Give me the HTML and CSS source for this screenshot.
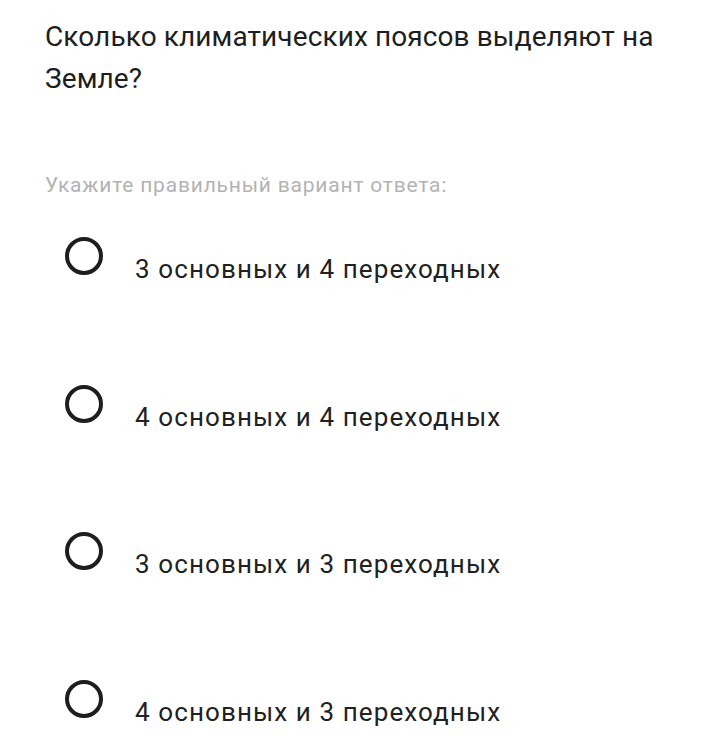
FILE: index.html
```html
<!DOCTYPE html>
<html lang="ru">
<head>
<meta charset="utf-8">
<link rel="stylesheet" href="styles.css">
</head>
<body>
<div class="page">
  <h1 class="question">Сколько климатических поясов выделяют на Земле?</h1>
  <p class="hint">Укажите правильный вариант ответа:</p>
  <ul class="options">
    <li class="option"><span class="radio"></span><span class="label">3 основных и 4 переходных</span></li>
    <li class="option"><span class="radio"></span><span class="label">4 основных и 4 переходных</span></li>
    <li class="option"><span class="radio"></span><span class="label">3 основных и 3 переходных</span></li>
    <li class="option"><span class="radio"></span><span class="label">4 основных и 3 переходных</span></li>
  </ul>
</div>
</body>
</html>
```

FILE: styles.css
```css
html, body {
  margin: 0;
  padding: 0;
  background: #ffffff;
}
.page {
  font-family: Roboto, "Noto Sans", sans-serif;
  color: #212121;
  padding: 16px 30px 0 45px;
}
.question {
  margin: 0;
  font-size: 28px;
  font-weight: 400;
  line-height: 42px;
  letter-spacing: 0.1px;
  color: #1e1e1e;
}
.hint {
  margin: 73px 0 0 0;
  font-size: 21px;
  line-height: 24px;
  letter-spacing: 0.8px;
  color: #b3b3b3;
}
.options {
  list-style: none;
  margin: 37px 0 0 0;
  padding: 0;
}
.option {
  display: flex;
  align-items: flex-start;
  height: 147.7px;
}
.radio {
  box-sizing: border-box;
  width: 38px;
  height: 38px;
  border: 4px solid #1e1e1e;
  border-radius: 50%;
  margin-left: 20px;
  margin-top: 3px;
  flex: none;
}
.label {
  margin-left: 32px;
  margin-top: 20px;
  font-size: 26px;
  line-height: 30px;
  letter-spacing: 1.1px;
  color: #212121;
}
```
